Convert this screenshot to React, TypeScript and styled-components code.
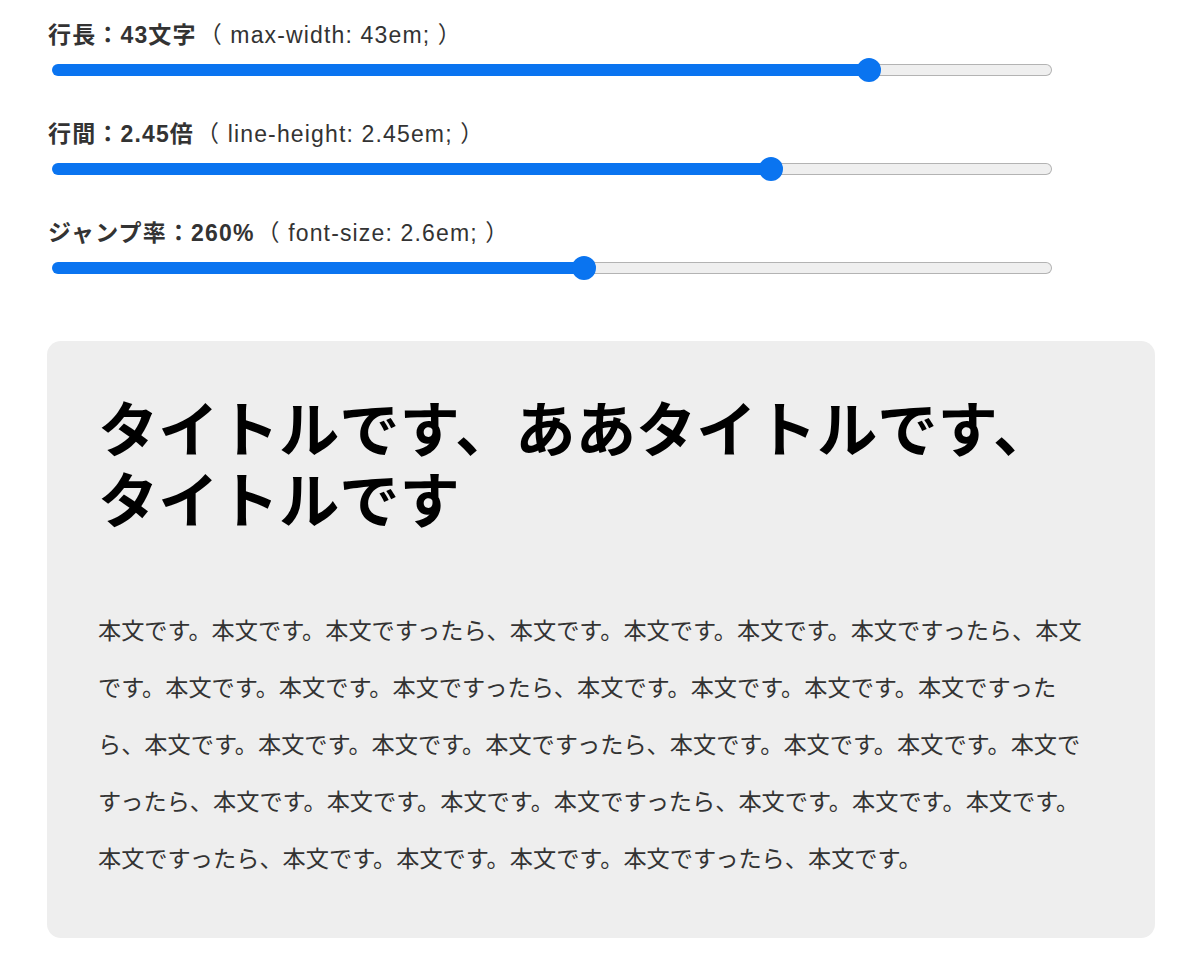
import React, { useState } from "react";
import { createGlobalStyle, styled } from "styled-components";

const GlobalStyle = createGlobalStyle`
  html, body {
    margin: 0;
    padding: 0;
    background: #ffffff;
  }
  body {
    font-family: "Liberation Sans", "Noto Sans CJK JP", sans-serif;
    color: #333333;
  }
`;

const Page = styled.div`
  padding: 18px 0 40px 47px;
`;

const Controls = styled.div`
  display: flex;
  flex-direction: column;
  gap: 35px;
  padding-left: 1px;
`;

const Control = styled.label`
  display: flex;
  flex-direction: column;
  gap: 6px;
`;

const Caption = styled.div`
  font-size: 23px;
  line-height: 34px;
  letter-spacing: 0.05em;
  color: #333333;
  white-space: nowrap;
`;

const Strong = styled.strong`
  font-weight: 700;
`;

const Note = styled.span`
  font-weight: 400;
  margin-left: 2px;
`;

const Range = styled.input`
  -webkit-appearance: none;
  appearance: none;
  display: block;
  width: 1000px;
  height: 24px;
  margin: 0 0 0 4px;
  padding: 0;
  background: transparent;
  cursor: pointer;

  &:focus {
    outline: none;
  }

  &::-webkit-slider-runnable-track {
    box-sizing: border-box;
    height: 12px;
    border-radius: 6px;
    border: 1px solid transparent;
    background:
      linear-gradient(to right, #0a74f0 var(--fill), transparent var(--fill)) border-box,
      linear-gradient(#efefef, #efefef) padding-box,
      linear-gradient(#b3b3b3, #b3b3b3) border-box;
  }

  &::-webkit-slider-thumb {
    -webkit-appearance: none;
    appearance: none;
    width: 24px;
    height: 24px;
    margin-top: -7px;
    border-radius: 50%;
    border: none;
    background: #0a74f0;
  }
`;

const Card = styled.article`
  box-sizing: border-box;
  width: 1108px;
  margin-top: 61px;
  padding: 50px 51px 53px;
  background: #eeeeee;
  border-radius: 14px;
`;

const Body = styled.div<{ $size: number; $measure: number; $leading: number }>`
  font-family: "Noto Sans CJK JP", sans-serif;
  font-size: ${({ $size }) => $size}px;
  max-width: ${({ $measure }) => $measure}em;
  line-break: strict;

  p {
    line-height: ${({ $leading }) => $leading}em;
  }
`;

const Title = styled.h1<{ $jump: number }>`
  margin: 0 0 69px;
  font-size: ${({ $jump }) => $jump / 100}em;
  line-height: 1.17;
  font-weight: 700;
  color: #000000;
`;

const Text = styled.p`
  margin: 0;
  color: #333333;
`;

const THUMB = 24;
const TRACK = 1000;

type SliderProps = {
  min: number;
  max: number;
  step: number;
  value: number;
  onChange: (v: number) => void;
  children: React.ReactNode;
};

const Slider = ({ min, max, step, value, onChange, children }: SliderProps) => {
  const ratio = (value - min) / (max - min);
  const fill = THUMB / 2 + ratio * (TRACK - THUMB);
  return (
    <Control>
      <Caption>{children}</Caption>
      <Range
        type="range"
        min={min}
        max={max}
        step={step}
        value={value}
        onChange={(e) => onChange(Number(e.target.value))}
        style={{ ["--fill" as string]: `${fill}px` } as React.CSSProperties}
      />
    </Control>
  );
};

const body =
  "本文です。本文です。本文ですったら、" +
  "本文です。本文です。本文です。本文ですったら、".repeat(8) +
  "本文です。";

const App = () => {
  const [measure, setMeasure] = useState(43);
  const [leading, setLeading] = useState(2.45);
  const [jump, setJump] = useState(260);

  return (
    <>
      <GlobalStyle />
      <Page>
        <Controls>
          <Slider min={10} max={50} step={1} value={measure} onChange={setMeasure}>
            <Strong>行長：{measure}文字</Strong>
            <Note>（ max-width: {measure}em; ）</Note>
          </Slider>
          <Slider min={1} max={3} step={0.05} value={leading} onChange={setLeading}>
            <Strong>行間：{leading.toFixed(2)}倍</Strong>
            <Note>（ line-height: {leading.toFixed(2)}em; ）</Note>
          </Slider>
          <Slider min={100} max={400} step={10} value={jump} onChange={setJump}>
            <Strong>ジャンプ率：{jump}%</Strong>
            <Note>（ font-size: {jump / 100}em; ）</Note>
          </Slider>
        </Controls>
        <Card>
          <Body $size={23.2} $measure={measure} $leading={leading}>
            <Title $jump={jump}>タイトルです、ああタイトルです、タイトルです</Title>
            <Text>{body}</Text>
          </Body>
        </Card>
      </Page>
    </>
  );
};

export default App;
